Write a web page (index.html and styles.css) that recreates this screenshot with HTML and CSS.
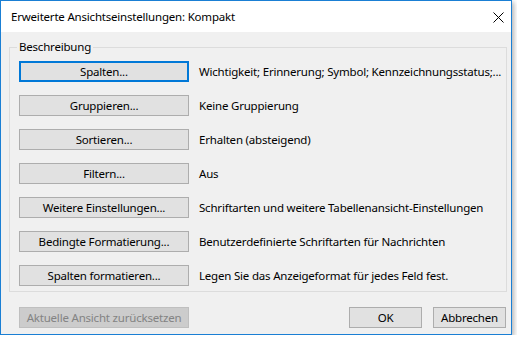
FILE: index.html
```html
<!DOCTYPE html>
<html lang="de">
<head>
    <meta charset="UTF-8">
    <meta name="viewport" content="width=device-width, initial-scale=1.0">
    <title>Erweiterte Ansichtseinstellungen: Kompakt</title>
    <link rel="stylesheet" href="styles.css">
</head>
<body>
    <div class="dialog">
        <div class="titlebar">
            <span class="title">Erweiterte Ansichtseinstellungen: Kompakt</span>
            <span class="close">
                <svg width="11" height="11" viewBox="0 0 11 11">
                    <path d="M0.5 0.5 L10.5 10.5 M10.5 0.5 L0.5 10.5" stroke="#000" stroke-width="1" fill="none"/>
                </svg>
            </span>
        </div>
        <div class="content">
            <fieldset class="group">
                <legend>Beschreibung</legend>
                <div class="rows">
                    <div class="row">
                        <button class="btn wide focused">Spalten...</button>
                        <span class="desc">Wichtigkeit; Erinnerung; Symbol; Kennzeichnungsstatus;...</span>
                    </div>
                    <div class="row">
                        <button class="btn wide">Gruppieren...</button>
                        <span class="desc">Keine Gruppierung</span>
                    </div>
                    <div class="row">
                        <button class="btn wide">Sortieren...</button>
                        <span class="desc">Erhalten (absteigend)</span>
                    </div>
                    <div class="row">
                        <button class="btn wide">Filtern...</button>
                        <span class="desc">Aus</span>
                    </div>
                    <div class="row">
                        <button class="btn wide">Weitere Einstellungen...</button>
                        <span class="desc">Schriftarten und weitere Tabellenansicht-Einstellungen</span>
                    </div>
                    <div class="row">
                        <button class="btn wide">Bedingte Formatierung...</button>
                        <span class="desc">Benutzerdefinierte Schriftarten für Nachrichten</span>
                    </div>
                    <div class="row">
                        <button class="btn wide">Spalten formatieren...</button>
                        <span class="desc">Legen Sie das Anzeigeformat für jedes Feld fest.</span>
                    </div>
                </div>
            </fieldset>
            <div class="footer">
                <button class="btn wide" disabled>Aktuelle Ansicht zurücksetzen</button>
                <div class="spacer"></div>
                <button class="btn small">OK</button>
                <button class="btn small">Abbrechen</button>
            </div>
        </div>
    </div>
</body>
</html>
```

FILE: styles.css
```css
body {
    margin: 0;
    padding: 0;
    background: #ffffff;
    font-family: 'Noto Sans', sans-serif;
    font-size: 11.5px;
    letter-spacing: -0.2px;
    color: #000;
}
.dialog {
    width: 510px;
    height: 333px;
    border: 1px solid #1a7fd4;
    background: #f0f0f0;
    box-shadow: 2px 2px 5px rgba(0, 0, 0, 0.3);
    display: flex;
    flex-direction: column;
}
.titlebar {
    height: 31px;
    background: #ffffff;
    display: flex;
    align-items: center;
    padding-left: 10px;
}
.title {
    flex: 1;
    line-height: 16px;
    padding-top: 1px;
}
.close {
    display: flex;
    margin-right: 7px;
    margin-top: 2px;
}
.content {
    flex: 1;
    padding: 7px 4px 6px 8px;
}
.group {
    margin: 0;
    padding: 0;
    min-width: 0;
    border: 1px solid #dcdcdc;
}
.group legend {
    margin-left: 7px;
    padding: 0 2px;
    line-height: 16px;
}
.rows {
    display: flex;
    flex-direction: column;
    gap: 13px;
    padding: 6px 0 5px 9px;
}
.row {
    display: flex;
    align-items: center;
    gap: 10px;
}
.btn {
    flex-shrink: 0;
    font-family: inherit;
    font-size: inherit;
    letter-spacing: inherit;
    color: #000;
    height: 21px;
    padding: 0;
    margin: 0;
    background: #e1e1e1;
    border: 1px solid #adadad;
    border-radius: 0;
    line-height: 16px;
}
.btn.wide {
    width: 170px;
}
.btn.small {
    width: 73px;
}
.btn.focused {
    border: 2px solid #0078d7;
}
.btn:disabled {
    background: #cccccc;
    border-color: #bfbfbf;
    color: #838383;
}
.desc {
    white-space: nowrap;
}
.footer {
    display: flex;
    gap: 11px;
    margin-top: 15px;
    padding: 0 1px 0 10px;
}
.spacer {
    flex: 1;
}
```
